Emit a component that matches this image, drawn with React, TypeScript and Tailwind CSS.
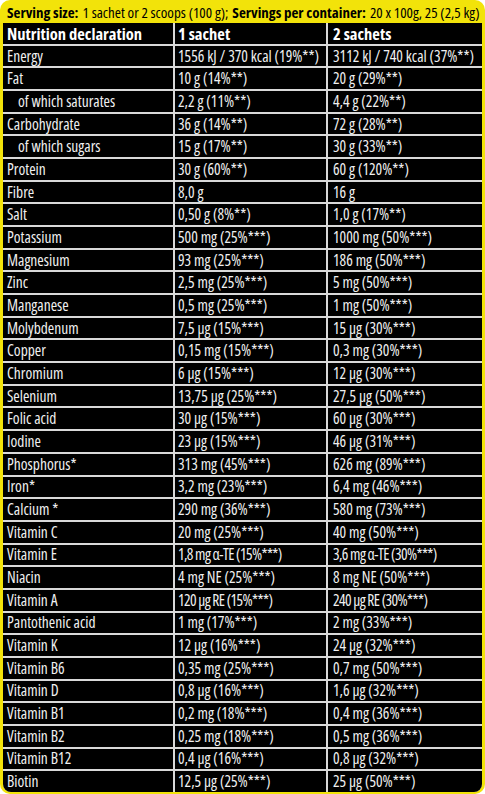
const rows: [string, string, string, boolean?][] = [
  ['Energy', '1556 kJ / 370 kcal (19%**)', '3112 kJ / 740 kcal (37%**)'],
  ['Fat', '10 g (14%**)', '20 g (29%**)'],
  ['of which saturates', '2,2 g (11%**)', '4,4 g (22%**)', true],
  ['Carbohydrate', '36 g (14%**)', '72 g (28%**)'],
  ['of which sugars', '15 g (17%**)', '30 g (33%**)', true],
  ['Protein', '30 g (60%**)', '60 g (120%**)'],
  ['Fibre', '8,0 g', '16 g'],
  ['Salt', '0,50 g (8%**)', '1,0 g (17%**)'],
  ['Potassium', '500 mg (25%***)', '1000 mg (50%***)'],
  ['Magnesium', '93 mg (25%***)', '186 mg (50%***)'],
  ['Zinc', '2,5 mg (25%***)', '5 mg (50%***)'],
  ['Manganese', '0,5 mg (25%***)', '1 mg (50%***)'],
  ['Molybdenum', '7,5 µg (15%***)', '15 µg (30%***)'],
  ['Copper', '0,15 mg (15%***)', '0,3 mg (30%***)'],
  ['Chromium', '6 µg (15%***)', '12 µg (30%***)'],
  ['Selenium', '13,75 µg (25%***)', '27,5 µg (50%***)'],
  ['Folic acid', '30 µg (15%***)', '60 µg (30%***)'],
  ['Iodine', '23 µg (15%***)', '46 µg (31%***)'],
  ['Phosphorus*', '313 mg (45%***)', '626 mg (89%***)'],
  ['Iron*', '3,2 mg (23%***)', '6,4 mg (46%***)'],
  ['Calcium *', '290 mg (36%***)', '580 mg (73%***)'],
  ['Vitamin C', '20 mg (25%***)', '40 mg (50%***)'],
  ['Vitamin E', '1,8 mg α-TE (15%***)', '3,6 mg α-TE (30%***)'],
  ['Niacin', '4 mg NE (25%***)', '8 mg NE (50%***)'],
  ['Vitamin A', '120 µg RE (15%***)', '240 µg RE (30%***)'],
  ['Pantothenic acid', '1 mg (17%***)', '2 mg (33%***)'],
  ['Vitamin K', '12 µg (16%***)', '24 µg (32%***)'],
  ['Vitamin B6', '0,35 mg (25%***)', '0,7 mg (50%***)'],
  ['Vitamin D', '0,8 µg (16%***)', '1,6 µg (32%***)'],
  ['Vitamin B1', '0,2 mg (18%***)', '0,4 mg (36%***)'],
  ['Vitamin B2', '0,25 mg (18%***)', '0,5 mg (36%***)'],
  ['Vitamin B12', '0,4 µg (16%***)', '0,8 µg (32%***)'],
  ['Biotin', '12,5 µg (25%***)', '25 µg (50%***)'],
];

// the printed label squeezes a few long values tighter than the rest
const tight = new Set(['Vitamin E', 'Vitamin A']);

const cell = 'bg-black flex items-center overflow-hidden whitespace-nowrap';

export default function App() {
  return (
    <div className="w-[485px] h-[794px] bg-[#f2e30a] rounded-[10px] pl-[3px] pr-[3px] pb-[2px] flex flex-col font-['Open_Sans',sans-serif] [font-stretch:75%]">
      <div className="h-[23px] flex items-center pl-[4px] text-[15px] leading-[20px] text-black whitespace-nowrap">
        <span className="font-bold">Serving size:</span>
        <span className="ml-1">1 sachet or 2 scoops (100 g);</span>
        <span className="font-bold ml-1">Servings per container:</span>
        <span className="ml-1">20 x 100g, 25 (2,5 kg)</span>
      </div>
      <div className="flex-1 grid grid-cols-[170px_151px_1fr] auto-rows-fr gap-x-[2px] gap-y-[2px] bg-[#d9d9d9] rounded-b-[8px] overflow-hidden text-[15.5px] leading-[19px] text-[#f0f0f0]">
        <div className={`${cell} pl-[4px] font-bold text-[16.5px] text-white`}>Nutrition declaration</div>
        <div className={`${cell} pl-[3px] font-bold text-[16.5px] text-white`}>1 sachet</div>
        <div className={`${cell} pl-[5px] font-bold text-[16.5px] text-white`}>2 sachets</div>
        {rows.map(([name, one, two, sub]) => (
          <div key={name} className="contents">
            <div className={`${cell} ${sub ? 'pl-[15px]' : 'pl-[4px]'}`}>{name}</div>
            <div className={`${cell} pl-[3px] ${tight.has(name) ? 'tracking-[-0.6px]' : ''}`}>{one}</div>
            <div className={`${cell} pl-[5px] ${tight.has(name) ? 'tracking-[-0.6px]' : ''}`}>{two}</div>
          </div>
        ))}
      </div>
    </div>
  );
}
